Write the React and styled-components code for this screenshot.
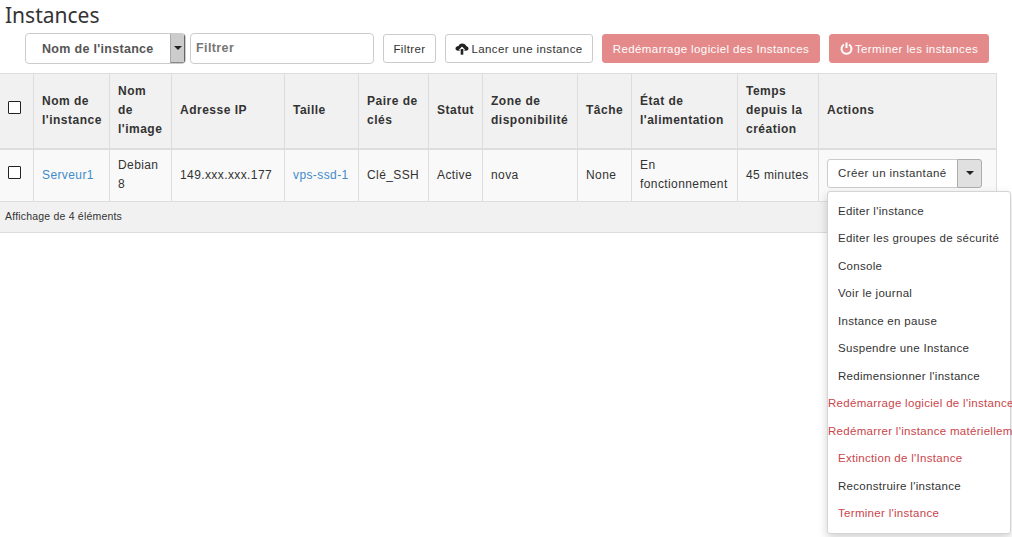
import React from 'react'
import styled, { createGlobalStyle } from 'styled-components'

const columns = [33, 76, 62, 113, 74, 70, 54, 95, 54, 106, 81, 178]

const menuItems = [
    { label: "Editer l'instance" },
    { label: 'Editer les groupes de sécurité' },
    { label: 'Console' },
    { label: 'Voir le journal' },
    { label: 'Instance en pause' },
    { label: 'Suspendre une Instance' },
    { label: "Redimensionner l'instance" },
    { label: "Redémarrage logiciel de l'instance", danger: true, flush: true },
    { label: "Redémarrer l'instance matériellement", danger: true, flush: true },
    { label: "Extinction de l'Instance", danger: true },
    { label: "Reconstruire l'instance" },
    { label: "Terminer l'instance", danger: true },
]

function App() {
    return (
        <Page>
            <GlobalStyle />
            <Title>Instances</Title>
            <Toolbar>
                <SelectBox>
                    <SelectLabel>Nom de l'instance</SelectLabel>
                    <SelectArrow><Caret /></SelectArrow>
                </SelectBox>
                <FilterInput placeholder="Filtrer" />
                <FilterButton>Filtrer</FilterButton>
                <LaunchButton>
                    <svg width="14" height="12" viewBox="0 0 14 12" fill="#222">
                        <path d="M7 .5C5.300 .5 4 1.500 3.600 3 1.900 3 .5 4.100 .5 5.600c0 1.300 1 2.200 2.400 2.200h2.300V7.200H3.600L7 3.600l3.400 3.600H8.800v.6h2.400c1.300 0 2.300-.9 2.300-2.200 0-1.200-.9-2.100-2.100-2.300C11 1.600 9.200 .5 7 .5z" />
                        <path d="M5.700 6h2.600v5.700H5.700z" />
                    </svg>
                    Lancer une instance
                </LaunchButton>
                <DangerButton $width={218}>Redémarrage logiciel des Instances</DangerButton>
                <DangerButton $width={160}>
                    <svg width="13" height="13" viewBox="0 0 13 13" fill="none" stroke="#fff" strokeWidth="2">
                        <path d="M4 2.500a5 5 0 1 0 5 0" />
                        <path d="M6.500 .5v5.500" />
                    </svg>
                    Terminer les instances
                </DangerButton>
            </Toolbar>
            <TableWrap>
                <Table>
                    <colgroup>
                        {columns.map((width, i) => <col key={i} width={width} />)}
                    </colgroup>
                    <thead>
                        <tr>
                            <HeadCell $check><Checkbox /></HeadCell>
                            <HeadCell>Nom de l'instance</HeadCell>
                            <HeadCell>Nom de l'image</HeadCell>
                            <HeadCell>Adresse IP</HeadCell>
                            <HeadCell>Taille</HeadCell>
                            <HeadCell>Paire de clés</HeadCell>
                            <HeadCell>Statut</HeadCell>
                            <HeadCell>Zone de disponibilité</HeadCell>
                            <HeadCell>Tâche</HeadCell>
                            <HeadCell>État de l'alimentation</HeadCell>
                            <HeadCell>Temps depuis la création</HeadCell>
                            <HeadCell>Actions</HeadCell>
                        </tr>
                    </thead>
                    <tbody>
                        <tr>
                            <Cell $check><Checkbox /></Cell>
                            <Cell><Link>Serveur1</Link></Cell>
                            <Cell>Debian 8</Cell>
                            <Cell>149.xxx.xxx.177</Cell>
                            <Cell><Link>vps-ssd-1</Link></Cell>
                            <Cell>Clé_SSH</Cell>
                            <Cell>Active</Cell>
                            <Cell>nova</Cell>
                            <Cell>None</Cell>
                            <Cell>En fonctionnement</Cell>
                            <Cell>45 minutes</Cell>
                            <Cell>
                                <ActionGroup>
                                    <ActionMain>Créer un instantané</ActionMain>
                                    <ActionToggle><Caret /></ActionToggle>
                                </ActionGroup>
                            </Cell>
                        </tr>
                    </tbody>
                </Table>
                <Footer>Affichage de 4 éléments</Footer>
                <Menu>
                    {menuItems.map(item => (
                        <MenuItem key={item.label} $danger={item.danger} $flush={item.flush}>{item.label}</MenuItem>
                    ))}
                </Menu>
            </TableWrap>
        </Page>
    )
}

const GlobalStyle = createGlobalStyle`
    html, body {
        margin: 0;
        height: 100%;
        overflow: hidden;
        background: #fff;
    }
    body {
        font-family: "Liberation Sans", Arial, sans-serif;
        font-size: 12px;
        letter-spacing: 0.4px;
        color: #333;
    }
`
const Page = styled.div`
    width: 1012px;
    height: 537px;
    overflow: hidden;
`
const Title = styled.h1`
    margin: 0;
    padding-left: 5px;
    height: 33px;
    font-family: "Noto Sans", sans-serif;
    font-size: 21px;
    font-weight: 400;
    line-height: 31px;
    letter-spacing: 0;
    color: #333;
`
const Toolbar = styled.div`
    display: flex;
    align-items: flex-start;
    height: 40px;
    padding-left: 25px;
`
const SelectBox = styled.div`
    display: flex;
    width: 161px;
    height: 31px;
    box-sizing: border-box;
    border: 1px solid #ccc;
    border-radius: 4px;
    overflow: hidden;
`
const SelectLabel = styled.div`
    flex: 1;
    padding-left: 16px;
    font-size: 12.500px;
    font-weight: 700;
    line-height: 30px;
    letter-spacing: 0.3px;
    color: #555;
`
const SelectArrow = styled.div`
    display: flex;
    align-items: center;
    justify-content: center;
    width: 15px;
    background: #ccc;
    border-left: 1px solid #aaa;
    border-right: 1px solid #666;
    border-bottom: 1px solid #888;
    box-sizing: border-box;
`
const Caret = styled.span`
    display: block;
    width: 0;
    height: 0;
    border-top: 4px solid #222;
    border-left: 4px solid transparent;
    border-right: 4px solid transparent;
`
const FilterInput = styled.input`
    width: 184px;
    height: 31px;
    box-sizing: border-box;
    margin-left: 4px;
    padding: 0 5px 2px;
    border: 1px solid #ccc;
    border-radius: 4px;
    font-family: inherit;
    font-size: 12.500px;
    font-weight: 700;
    letter-spacing: 0.4px;
    outline: none;
    &::placeholder {
        color: #777;
        opacity: 1;
    }
`
const Button = styled.button`
    display: flex;
    align-items: center;
    justify-content: center;
    gap: 2px;
    height: 29px;
    margin: 1px 0 0 9px;
    padding: 0;
    box-sizing: border-box;
    background: #fff;
    border: 1px solid #ccc;
    border-radius: 3px;
    font-family: inherit;
    font-size: 11.500px;
    letter-spacing: 0.4px;
    color: #333;
    white-space: nowrap;
`
const FilterButton = styled(Button)`
    width: 53px;
`
const LaunchButton = styled(Button)`
    width: 148px;
`
const DangerButton = styled(Button)`
    width: ${props => props.$width}px;
    background: #e58a8a;
    border-color: #e58a8a;
    color: #fff;
`
const TableWrap = styled.div`
    position: relative;
    width: 996px;
`
const Table = styled.table`
    width: 996px;
    table-layout: fixed;
    border-collapse: collapse;
    th:first-child, td:first-child {
        border-left: none;
    }
`
const HeadCell = styled.th`
    height: 75px;
    padding: ${props => (props.$check ? '0 0 6px 8px' : '0 7px 0 8.500px')};
    box-sizing: border-box;
    background: #f1f1f1;
    border: 1px solid #ddd;
    border-bottom-width: 2px;
    font-size: 12px;
    font-weight: 700;
    line-height: 19px;
    letter-spacing: 0.5px;
    text-align: left;
    vertical-align: middle;
    color: #333;
`
const Cell = styled.td`
    height: 53px;
    padding: ${props => (props.$check ? '0 0 6px 8px' : '0 7px 0 8.500px')};
    box-sizing: border-box;
    background: #f9f9f9;
    border: 1px solid #ddd;
    line-height: 19px;
    text-align: left;
    vertical-align: middle;
`
const Checkbox = styled.span`
    display: block;
    width: 13px;
    height: 13px;
    box-sizing: border-box;
    border: 1px solid #222;
    border-radius: 1px;
    background: #fff;
`
const Link = styled.a`
    color: #428bca;
`
const ActionGroup = styled.div`
    display: flex;
    width: 155px;
    height: 29px;
    margin-top: -4px;
`
const ActionMain = styled.div`
    flex: 1;
    padding-left: 10px;
    background: #fff;
    border: 1px solid #ccc;
    border-radius: 3px 0 0 3px;
    font-size: 11.500px;
    line-height: 27px;
`
const ActionToggle = styled.div`
    display: flex;
    align-items: center;
    justify-content: center;
    width: 25px;
    margin-left: -1px;
    box-sizing: border-box;
    background: #e0e0e0;
    border: 1px solid #adadad;
    border-radius: 0 3px 3px 0;
`
const Footer = styled.div`
    height: 31px;
    padding-left: 5px;
    box-sizing: border-box;
    background: #f1f1f1;
    border-bottom: 1px solid #ddd;
    font-size: 10.500px;
    letter-spacing: 0.2px;
    line-height: 28px;
`
const Menu = styled.ul`
    position: absolute;
    top: 118px;
    left: 827px;
    width: 184px;
    height: 343px;
    box-sizing: border-box;
    margin: 0;
    padding: 5.700px 0 0;
    list-style: none;
    background: #fff;
    border: 1px solid #d4d4d4;
    border-radius: 3px;
    box-shadow: 0 4px 10px rgba(0, 0, 0, 0.18);
`
const MenuItem = styled.li`
    height: 27.500px;
    padding-left: ${props => (props.$flush ? '0' : '10px')};
    font-size: 11.500px;
    line-height: 27px;
    letter-spacing: 0.3px;
    white-space: nowrap;
    color: ${props => (props.$danger ? '#c9454b' : '#333')};
`

export default App
